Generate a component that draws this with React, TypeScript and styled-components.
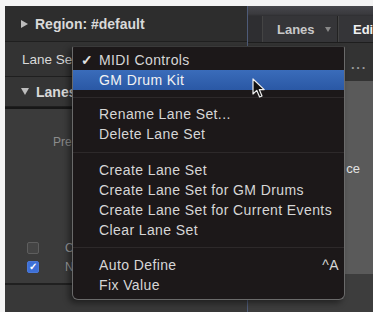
import React from "react";
import styled, { createGlobalStyle } from "styled-components";

const Global = createGlobalStyle`
  html, body { margin: 0; padding: 0; background: #f4f4f4; }
  body { width: 373px; height: 312px; overflow: hidden; }
`;

const Frame = styled.div`
  position: relative;
  margin: 6px 0 0 5px;
  height: 306px;
  display: grid;
  grid-template-columns: 242px 126px;
  background: #333;
  overflow: hidden;
  font-family: "Liberation Sans", Arial, sans-serif;
`;

const LeftPanel = styled.div`
  display: flex;
  flex-direction: column;
  background: #3a3a3a;
`;

const HeaderRow = styled.div<{ $h: number; $bg: string; $bold?: boolean; $pad?: number }>`
  height: ${(p) => p.$h}px;
  background: ${(p) => p.$bg};
  border-bottom: 1px solid #1f1f1f;
  display: flex;
  align-items: center;
  gap: 7px;
  padding-left: ${(p) => p.$pad ?? 16}px;
  color: #d9d9d9;
  font-size: ${(p) => (p.$bold ? 14 : 13.5)}px;
  font-weight: ${(p) => (p.$bold ? 700 : 400)};
  flex-shrink: 0;
`;

const Tri = styled.span<{ $down?: boolean }>`
  width: 0;
  height: 0;
  ${(p) =>
    p.$down
      ? `border-left: 4px solid transparent; border-right: 4px solid transparent; border-top: 7px solid #bdbdbd;`
      : `border-top: 4px solid transparent; border-bottom: 4px solid transparent; border-left: 7px solid #bdbdbd;`}
`;

const ThickLine = styled.div`
  height: 2px;
  background: #171717;
  flex-shrink: 0;
`;

const Body = styled.div`
  flex: 1;
  display: flex;
  flex-direction: column;
  background: #3b3b3b;
`;

const Label = styled.div`
  margin-top: 25px;
  height: 16px;
  padding-left: 48px;
  color: #8c8c8c;
  font-size: 12px;
  line-height: 16px;
`;

const Spacer = styled.div<{ $h: number }>`
  height: ${(p) => p.$h}px;
  flex-shrink: 0;
`;

const CheckRow = styled.div`
  height: 19px;
  display: flex;
  align-items: center;
  padding-left: 22px;
  gap: 26px;
  color: #9a9a9a;
  font-size: 12px;
`;

const Box = styled.span<{ $on?: boolean }>`
  width: 10px;
  height: 10px;
  border-radius: 2px;
  border: 1px solid ${(p) => (p.$on ? "#4a78d8" : "#5e5e5e")};
  background: ${(p) => (p.$on ? "#3d6fd6" : "#444")};
  color: #fff;
  font-size: 10px;
  line-height: 10px;
  text-align: center;
  font-weight: 700;
`;

const BottomLine = styled.div`
  margin-top: 7px;
  height: 2px;
  background: #202020;
`;

const BottomArea = styled.div`
  flex: 1;
  background: #383838;
`;

const RightPanel = styled.div`
  display: flex;
  flex-direction: column;
  border-left: 1px solid #4e5b78;
`;

const TopBar = styled.div`
  height: 36px;
  background: linear-gradient(#47474c 0px, #3a3a3e 8px, #2e2e31 10px, #2e2e31 100%);
  display: flex;
  align-items: flex-end;
  padding-left: 14px;
  border-bottom: 1px solid #1e1e1e;
  flex-shrink: 0;
  overflow: hidden;
`;

const Tab = styled.div<{ $w: number; $bright?: boolean }>`
  width: ${(p) => p.$w}px;
  height: 26px;
  display: flex;
  align-items: center;
  gap: 10px;
  padding-left: 14px;
  box-sizing: border-box;
  background: #353538;
  border-right: 1px solid #222;
  border-left: 1px solid #444;
  color: ${(p) => (p.$bright ? "#f0f0f0" : "#c8c8c8")};
  font-size: 13px;
  font-weight: 700;
  flex-shrink: 0;
`;

const SmallArrow = styled.span`
  width: 0;
  height: 0;
  border-left: 3px solid transparent;
  border-right: 3px solid transparent;
  border-top: 5px solid #888;
`;

const SubRow = styled.div`
  height: 32px;
  background: #333;
  display: flex;
  align-items: flex-end;
  padding: 0 0 6px 103px;
  color: #9a9a9a;
  font-size: 13px;
  font-weight: 700;
  letter-spacing: 1px;
  flex-shrink: 0;
`;

const LightArea = styled.div`
  height: 193px;
  background: #5a5a5a;
  display: flex;
  justify-content: flex-end;
  padding: 80px 13px 0 0;
  box-sizing: border-box;
  color: #e2e2e2;
  font-size: 13px;
  flex-shrink: 0;
`;

const DarkArea = styled.div`
  flex: 1;
  background: #3d3d3d;
`;

const Menu = styled.div`
  position: absolute;
  left: 67px;
  top: 40px;
  width: 273px;
  box-sizing: border-box;
  padding: 3px 0 4px;
  background: #1c1819;
  border: 1px solid #6a6a6a;
  border-top-color: #3a3a3a;
  border-radius: 2px 2px 6px 6px;
  box-shadow: -3px 3px 6px rgba(0, 0, 0, 0.45);
  font-size: 14px;
  letter-spacing: 0.4px;
  color: #d6d6d6;
`;

const Item = styled.div<{ $hi?: boolean }>`
  height: 20px;
  display: flex;
  align-items: center;
  padding: 0 3px 0 26px;
  position: relative;
  background: ${(p) => (p.$hi ? "linear-gradient(#3a6cba, #2a58a5)" : "transparent")};
  color: ${(p) => (p.$hi ? "#f2f2f2" : "#d6d6d6")};
`;

const Check = styled.span`
  position: absolute;
  left: 8px;
  font-size: 14px;
  font-weight: 700;
  color: #e0e0e0;
`;

const Shortcut = styled.span`
  margin-left: auto;
  padding-right: 2px;
  color: #d6d6d6;
`;

const Sep = styled.div<{ $h: number }>`
  height: ${(p) => p.$h}px;
  display: flex;
  align-items: center;
  &::after {
    content: "";
    flex: 1;
    height: 1px;
    background: #2d292a;
  }
`;

const Cursor = styled.svg`
  position: absolute;
  left: 247px;
  top: 72px;
`;

export default function App() {
  return (
    <>
      <Global />
      <Frame>
        <LeftPanel>
          <HeaderRow $h={35} $bg="#2d2d2d" $bold>
            <Tri />
            <span>Region: #default</span>
          </HeaderRow>
          <HeaderRow $h={34} $bg="#333" $pad={17}>
            <span>Lane Set:</span>
          </HeaderRow>
          <HeaderRow $h={29} $bg="#353535" $bold>
            <Tri $down />
            <span>Lanes</span>
          </HeaderRow>
          <ThickLine />
          <Body>
            <Label>Preset</Label>
            <Spacer $h={88} />
            <CheckRow>
              <Box />
              <span>C</span>
            </CheckRow>
            <CheckRow>
              <Box $on>✓</Box>
              <span>N</span>
            </CheckRow>
            <BottomLine />
            <BottomArea />
          </Body>
        </LeftPanel>
        <RightPanel>
          <TopBar>
            <Tab $w={76}>
              <span>Lanes</span>
              <SmallArrow />
            </Tab>
            <Tab $w={60} $bright>
              Edi
            </Tab>
          </TopBar>
          <SubRow>···</SubRow>
          <LightArea>ce</LightArea>
          <DarkArea />
        </RightPanel>

        <Menu>
          <Item>
            <Check>✓</Check>MIDI Controls
          </Item>
          <Item $hi>GM Drum Kit</Item>
          <Sep $h={14} />
          <Item>Rename Lane Set...</Item>
          <Item>Delete Lane Set</Item>
          <Sep $h={16} />
          <Item>Create Lane Set</Item>
          <Item>Create Lane Set for GM Drums</Item>
          <Item>Create Lane Set for Current Events</Item>
          <Item>Clear Lane Set</Item>
          <Sep $h={15} />
          <Item>
            Auto Define<Shortcut>^A</Shortcut>
          </Item>
          <Item>Fix Value</Item>
        </Menu>

        <Cursor width="14" height="21" viewBox="0 0 14 21">
          <path
            d="M1 1 L1 16 L4.8 12.4 L7.6 19 L10 18 L7.3 11.6 L12.2 11.6 Z"
            fill="#111"
            stroke="#eee"
            strokeWidth="1.2"
            strokeLinejoin="round"
          />
        </Cursor>
      </Frame>
    </>
  );
}
